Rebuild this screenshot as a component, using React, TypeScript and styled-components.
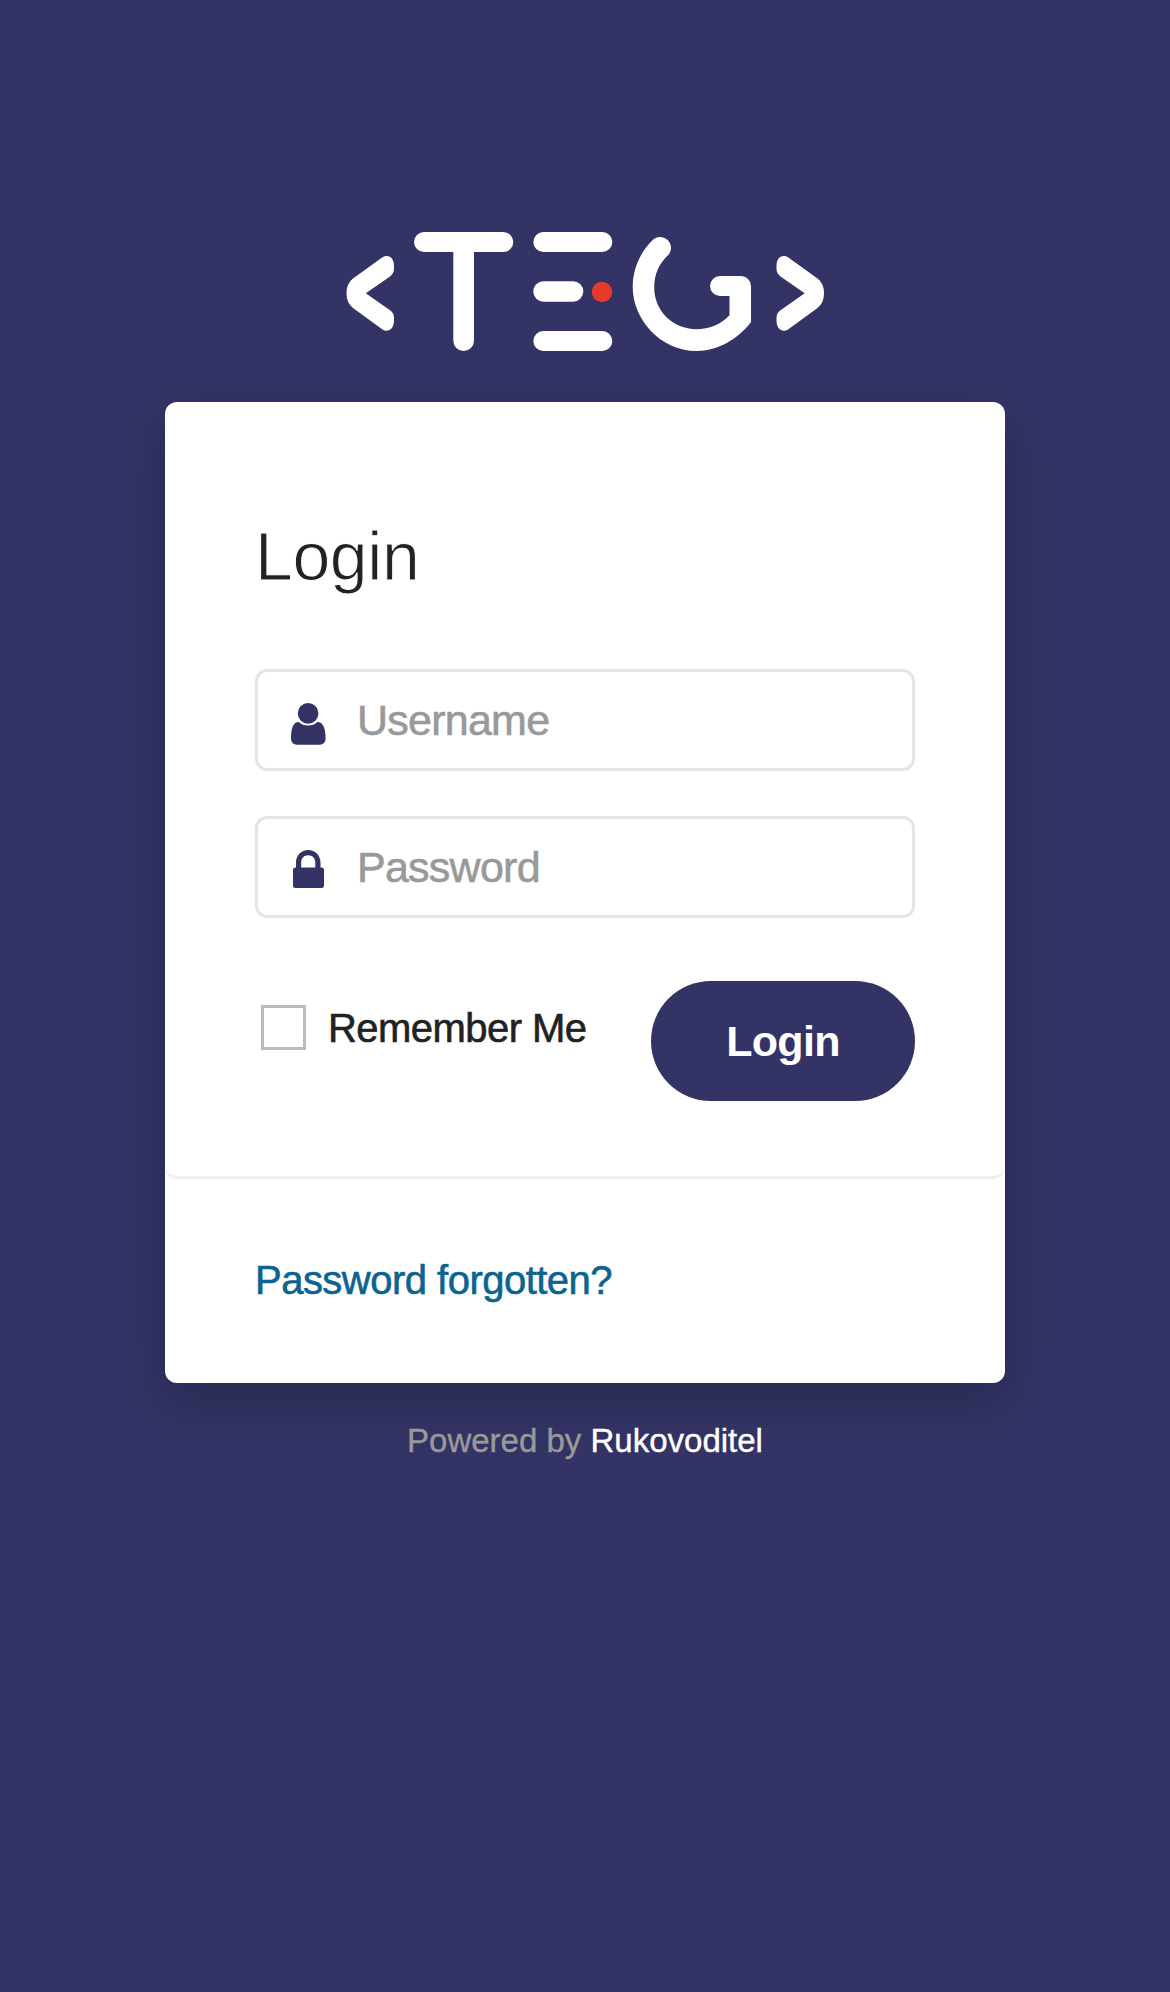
import React from "react";
import styled, { createGlobalStyle } from "styled-components";

const navy = "#333365";

const GlobalStyle = createGlobalStyle`
  *, *::before, *::after { box-sizing: border-box; }
  body {
    margin: 0;
    background: ${navy};
    color: #222;
    font-family: "Liberation Sans", Arial, Helvetica, sans-serif;
  }
`;

const Page = styled.div`
  display: flex;
  flex-direction: column;
  align-items: center;
  min-height: 1992px;
  padding-top: 231px;
`;

const Logo = styled.svg`
  display: block;
  width: 480px;
  height: 121px;
  margin-bottom: 50px;
`;

const Card = styled.main`
  width: 840px;
  background: #fff;
  border-radius: 12px;
  box-shadow: 0 18px 48px rgba(0, 0, 0, 0.19);
`;

const Form = styled.form`
  padding: 90px 90px 75px;
  border-bottom: 3px solid #eee;
  border-radius: 12px;
`;

const Title = styled.h3`
  margin: 0 0 49px;
  font-size: 68px;
  font-weight: 400;
  line-height: 128px;
  letter-spacing: -0.4px;
  -webkit-text-stroke: 1px #fff;
`;

const Field = styled.label`
  display: flex;
  align-items: center;
  height: 102px;
  padding-left: 33px;
  border: 3px solid #e5e5e5;
  border-radius: 12px;

  & + & { margin-top: 45px; }
`;

const FieldIcon = styled.svg`
  flex: none;
  width: 36px;
  height: 46px;
  margin: 6px 30px 0 0;
  fill: ${navy};
`;

const Input = styled.input`
  flex: 1;
  min-width: 0;
  height: 96px;
  padding: 0;
  border: 0;
  outline: 0;
  background: transparent;
  font: 400 43px "Liberation Sans", Arial, sans-serif;
  letter-spacing: -0.75px;
  color: #222;

  &::placeholder {
    color: #999;
    opacity: 1;
    -webkit-text-stroke: 0.6px #999;
  }
`;

const Actions = styled.div`
  display: flex;
  align-items: flex-start;
  justify-content: space-between;
  margin-top: 63px;
`;

const Remember = styled.label`
  display: flex;
  align-items: center;
  gap: 22px;
  padding: 24px 0 0 6px;
  font-size: 40px;
  line-height: 47px;
  letter-spacing: -0.55px;
  -webkit-text-stroke: 0.6px #222;
`;

const Checkbox = styled.input`
  appearance: none;
  width: 45px;
  height: 45px;
  margin: 0 0 2px;
  border: 3px solid #bbb;
  background: #fff;
`;

const Submit = styled.button`
  width: 264px;
  height: 120px;
  padding: 0;
  border: 0;
  border-radius: 60px;
  background: ${navy};
  color: #fff;
  font: 700 43px "Liberation Sans", Arial, sans-serif;
  letter-spacing: -0.7px;
`;

const Footer = styled.div`
  padding: 74px 90px 76px;
  font-size: 40px;
  line-height: 54px;
  letter-spacing: -0.52px;
`;

const ForgotLink = styled.a`
  color: #0d638f;
  text-decoration: none;
  -webkit-text-stroke: 0.6px #0d638f;
`;

const Credit = styled.div`
  margin-top: 34px;
  font-size: 33px;
  line-height: 48px;
  color: #999;
  -webkit-text-stroke: 0.4px currentColor;
`;

const CreditLink = styled.a`
  color: #fff;
  text-decoration: none;
`;

const chevron =
  "M382.5 257.2 C387 254.5 394 256 394 266 V269 Q394 273.5 390 276.4 L365.8 293.3 L390 310.2 Q394 313.1 394 317.6 V320.6 C394 330.6 387 332.5 382.5 329.4 L353 308 Q346.5 303 346.5 293.3 Q346.5 283.6 353 278.6 Z";

export default function App() {
  return (
    <>
      <GlobalStyle />
      <Page>
        <Logo viewBox="345 231 480 121" fill="#fff" role="img" aria-label="TEG">
          <path d={chevron} />
          <path d={chevron} transform="translate(1170.5 0) scale(-1 1)" />
          <rect x="414" y="232" width="99.3" height="20" rx="10" />
          <rect x="453.3" y="232" width="20.7" height="119" rx="10.3" />
          <rect x="533.3" y="232" width="79" height="20" rx="10" />
          <rect x="533.3" y="281.3" width="50" height="20.4" rx="10.2" />
          <rect x="533.3" y="331" width="79" height="20" rx="10" />
          <circle cx="602" cy="292" r="10.2" fill="#e8392b" />
          <path d="M751 322 C738 339 718 351 696.5 351 C660 351 632.7 319 632.7 287 C632.7 268 641 251 653.5 239.3 A10.9 10.9 0 0 1 669 254.3 C659 263.5 654.2 274 654.2 287.5 C654.2 311 673 329.2 696.5 329.2 C709 329.2 721 324.5 729.5 315.2 V296 H720 A10 10 0 0 1 720 276 H741 A10 10 0 0 1 751 286 Z" />
        </Logo>
        <Card>
          <Form onSubmit={(e) => e.preventDefault()}>
            <Title>Login</Title>
            <Field>
              <FieldIcon viewBox="0 0 36 46">
                <circle cx="17.1" cy="13.4" r="10.3" />
                <path d="M7.8 22 C10.2 24.3 13.5 25.6 17.1 25.6 C20.7 25.6 24 24.3 26.4 22 C32 22 34.6 28 34.6 38.5 C34.6 42 32 44.7 28.8 44.7 H5.8 C2.600 44.700 0 42 0 38.500 C0 28 2.300 22 7.800 22 Z" />
              </FieldIcon>
              <Input type="text" placeholder="Username" aria-label="Username" />
            </Field>
            <Field>
              <FieldIcon viewBox="0 0 36 46">
                <path
                  fillRule="evenodd"
                  d="M5 20.5 V15.5 C5 8 10.5 3 17.2 3 C24 3 29.5 8 29.5 15.5 V20.5 H30.5 Q33 20.5 33 23 V38.5 Q33 41 30.5 41 H4.5 Q2 41 2 38.5 V23 Q2 20.5 4.5 20.5 Z M10.2 20.5 H24.3 V15.5 C24.3 11 21.3 8.2 17.2 8.2 C13.2 8.2 10.2 11 10.2 15.5 Z"
                />
              </FieldIcon>
              <Input type="password" placeholder="Password" aria-label="Password" />
            </Field>
            <Actions>
              <Remember>
                <Checkbox type="checkbox" />
                Remember Me
              </Remember>
              <Submit type="submit">Login</Submit>
            </Actions>
          </Form>
          <Footer>
            <ForgotLink href="#">Password forgotten?</ForgotLink>
          </Footer>
        </Card>
        <Credit>
          Powered by <CreditLink href="#">Rukovoditel</CreditLink>
        </Credit>
      </Page>
    </>
  );
}
